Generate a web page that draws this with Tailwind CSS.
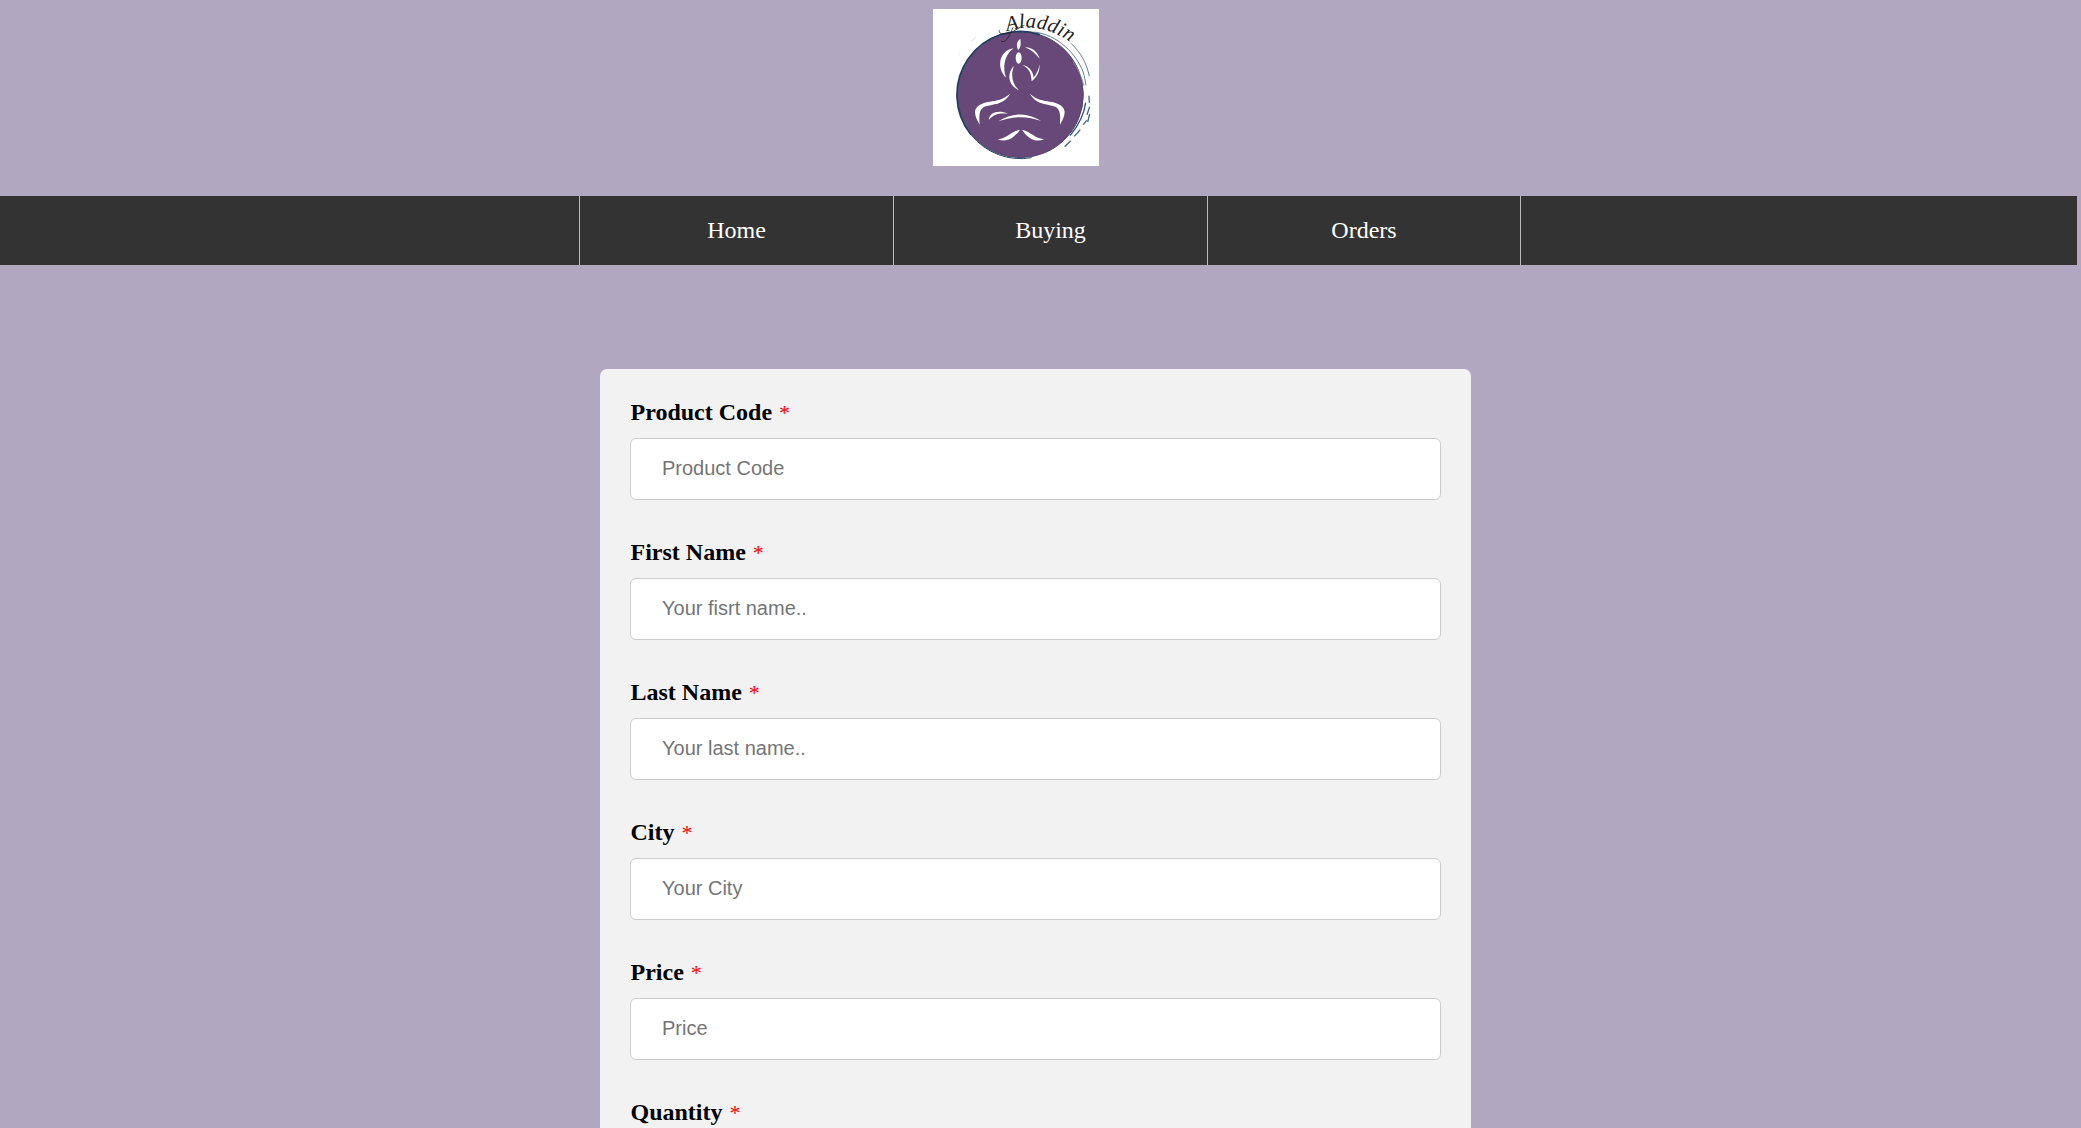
<!DOCTYPE html>
<html lang="en">
<head>
<meta charset="utf-8">
<title>Aladdin</title>
<script src="https://cdn.jsdelivr.net/npm/@tailwindcss/browser@4"></script>
</head>
<body class="bg-[#b1a7c1] h-screen overflow-hidden font-['Liberation_Serif',serif] text-black">
<header class="h-[196px] pt-[9px] pl-[933px]">
<svg class="block w-[166px] h-[157px] bg-white overflow-visible" viewBox="24 27 498 471" preserveAspectRatio="none" role="img">
<defs><path id="arc" d="M244 94C308 74 370 78 446 134"/></defs>
<circle cx="286" cy="284" r="189" fill="#684779" stroke="#4b4872" stroke-width="3"/>
<path d="M345 104A190 190 0 0 0 138 404" fill="none" stroke="#203e62" stroke-width="5"/>
<path d="M138 404A190 190 0 0 0 320 473" fill="none" stroke="#284b70" stroke-width="3"/>
<g fill="none" stroke="#416786" stroke-width="2.5">
<path d="M325 96C398 102 455 164 474 215C479 230 481 244 483 256M438 130C467 157 485 190 493 229"/>
<path d="M443 183Q469 222 477 258" stroke="#7992a9"/>
<path d="M482 308C478 340 459 378 435 407" stroke="#31577a" stroke-width="4"/>
<path d="M492 287L493 308M494 320L486 344M494 342L488 366M485 361L475 374M466 389L448 409M437 422L419 440" stroke-width="4"/>
<path d="M138 124L153 112M102 164L106 162" stroke="#d2dae1"/>
</g>
<g fill="#fff">
<path d="M286 116C272 128 275 137 279 150C288 143 288 132 286 116Z"/>
<ellipse cx="281" cy="174" rx="9" ry="17"/>
<path d="M266 145C218 152 216 209 243 233C233 204 236 166 266 145Z"/>
<path d="M300 142C322 141 338 157 344 176C331 160 318 149 300 142Z"/>
<path d="M343 193C346 214 335 233 320 244C318 216 312 205 292 195C310 198 324 211 326 233C336 220 342 207 343 193Z"/>
<path d="M267 197C244 220 250 258 281 270C262 251 256 226 267 197Z"/>
<path d="M255 281C234 299 214 302 194 305C166 309 150 321 150 336C150 350 158 363 164 374C163 350 160 329 178 320C202 312 239 314 255 281Z"/>
<path d="M315 281C334 299 355 302 375 305C403 309 419 321 419 336C419 350 411 363 405 374C406 350 408 329 391 320C366 311 332 314 315 281Z"/>
<path d="M191 360C194 337 219 329 249 341C219 339 207 342 191 360Z"/>
<path d="M220 364C266 337 306 336 349 363C306 348 270 347 220 364Z"/>
<path d="M285 389C256 396 249 413 218 418C246 429 268 414 285 389Z"/>
<path d="M291 389C320 396 326 413 357 418C329 429 308 414 291 389Z"/>
</g>
<path d="M223 91C220 105 240 104 259 97C275 90 288 78 298 76M228 124C242 130 252 111 264 82" fill="none" stroke="#222" stroke-width="2.5"/>
<text font-family="Liberation Serif, serif" font-style="italic" font-size="62" fill="#222"><textPath href="#arc" startOffset="2" textLength="200" lengthAdjust="spacing">Aladdin</textPath></text>
</svg>
</header>
<nav class="w-[2077px] h-[69px] bg-[#333] pl-[579px] flex text-white text-2xl">
<a class="w-[315px] border-x border-[#bbb] flex items-center justify-center pb-[2px]">Home</a>
<a class="w-[314px] border-r border-[#bbb] flex items-center justify-center pb-[2px]">Buying</a>
<a class="w-[313px] border-r border-[#bbb] flex items-center justify-center pb-[2px]">Orders</a>
</nav>
<form class="mt-[104px] ml-[600px] w-[871px] h-[759px] rounded-t-[7px] bg-[#f2f2f2] px-[30px] pt-[29px] overflow-hidden">
<div class="h-[140px]"><label class="block h-10 pl-[0.5px] leading-[28px] text-2xl font-bold">Product Code <span class="text-[22px] font-normal leading-none ml-px text-[red]">*</span></label><input class="block w-full h-[62px] rounded-[6px] border border-[#ccc] bg-white px-[31px] pb-[2px] text-xl font-['Liberation_Sans',sans-serif] placeholder:text-[#757575]" placeholder="Product Code"></div>
<div class="h-[140px]"><label class="block h-10 pl-[0.5px] leading-[28px] text-2xl font-bold">First Name <span class="text-[22px] font-normal leading-none ml-px text-[red]">*</span></label><input class="block w-full h-[62px] rounded-[6px] border border-[#ccc] bg-white px-[31px] pb-[2px] text-xl font-['Liberation_Sans',sans-serif] placeholder:text-[#757575]" placeholder="Your fisrt name.."></div>
<div class="h-[140px]"><label class="block h-10 pl-[0.5px] leading-[28px] text-2xl font-bold">Last Name <span class="text-[22px] font-normal leading-none ml-px text-[red]">*</span></label><input class="block w-full h-[62px] rounded-[6px] border border-[#ccc] bg-white px-[31px] pb-[2px] text-xl font-['Liberation_Sans',sans-serif] placeholder:text-[#757575]" placeholder="Your last name.."></div>
<div class="h-[140px]"><label class="block h-10 pl-[0.5px] leading-[28px] text-2xl font-bold">City <span class="text-[22px] font-normal leading-none ml-px text-[red]">*</span></label><input class="block w-full h-[62px] rounded-[6px] border border-[#ccc] bg-white px-[31px] pb-[2px] text-xl font-['Liberation_Sans',sans-serif] placeholder:text-[#757575]" placeholder="Your City"></div>
<div class="h-[140px]"><label class="block h-10 pl-[0.5px] leading-[28px] text-2xl font-bold">Price <span class="text-[22px] font-normal leading-none ml-px text-[red]">*</span></label><input class="block w-full h-[62px] rounded-[6px] border border-[#ccc] bg-white px-[31px] pb-[2px] text-xl font-['Liberation_Sans',sans-serif] placeholder:text-[#757575]" placeholder="Price"></div>
<div class="h-[30px]"><label class="block pl-[0.5px] leading-[28px] text-2xl font-bold">Quantity <span class="text-[22px] font-normal leading-none ml-px text-[red]">*</span></label></div>
</form>
</body>
</html>
